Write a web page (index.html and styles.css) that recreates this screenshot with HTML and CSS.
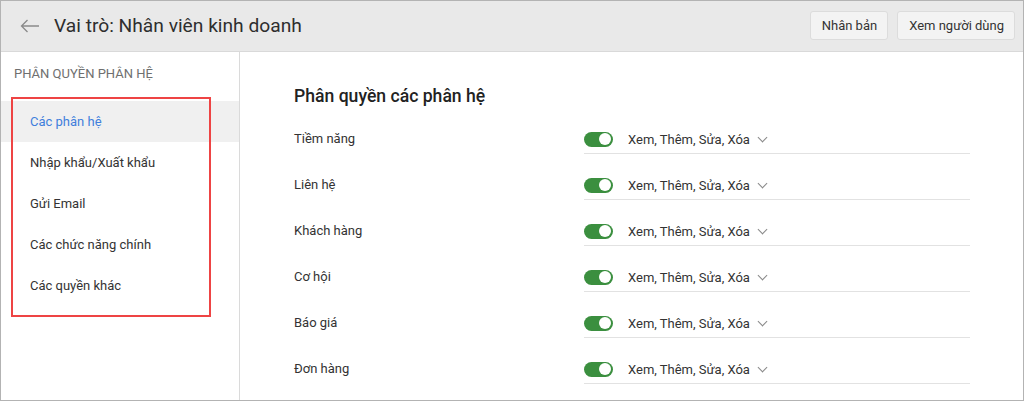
FILE: index.html
```html
<!DOCTYPE html>
<html>
<head>
    <title>Vai trò: Nhân viên kinh doanh</title>
    <meta charset="utf-8">
    <link rel="stylesheet" href="styles.css">
</head>
<body>
    <div class="frame">
        <div class="header">
            <div class="header-left">
                <svg class="back" width="20" height="14" viewBox="0 0 20 14">
                    <path d="M19 7H1.5M7.5 1L1.5 7l6 6" fill="none" stroke="#8a8a8a" stroke-width="1.3"/>
                </svg>
                <h1>Vai trò: Nhân viên kinh doanh</h1>
            </div>
            <div class="header-actions">
                <button class="btn">Nhân bản</button>
                <button class="btn">Xem người dùng</button>
            </div>
        </div>

        <div class="content">
            <div class="sidebar">
                <div class="sidebar-title">PHÂN QUYỀN PHÂN HỆ</div>
                <ul class="menu">
                    <li class="active">Các phân hệ</li>
                    <li>Nhập khẩu/Xuất khẩu</li>
                    <li>Gửi Email</li>
                    <li>Các chức năng chính</li>
                    <li>Các quyền khác</li>
                </ul>
                <div class="highlight"></div>
            </div>

            <div class="main">
                <h2>Phân quyền các phân hệ</h2>
                <div class="perm-row">
                    <div class="perm-name">Tiềm năng</div>
                    <div class="perm-ctrl"><span class="toggle"></span><span class="perm-value">Xem, Thêm, Sửa, Xóa</span><span class="chev"></span></div>
                </div>
                <div class="perm-row">
                    <div class="perm-name">Liên hệ</div>
                    <div class="perm-ctrl"><span class="toggle"></span><span class="perm-value">Xem, Thêm, Sửa, Xóa</span><span class="chev"></span></div>
                </div>
                <div class="perm-row">
                    <div class="perm-name">Khách hàng</div>
                    <div class="perm-ctrl"><span class="toggle"></span><span class="perm-value">Xem, Thêm, Sửa, Xóa</span><span class="chev"></span></div>
                </div>
                <div class="perm-row">
                    <div class="perm-name">Cơ hội</div>
                    <div class="perm-ctrl"><span class="toggle"></span><span class="perm-value">Xem, Thêm, Sửa, Xóa</span><span class="chev"></span></div>
                </div>
                <div class="perm-row">
                    <div class="perm-name">Báo giá</div>
                    <div class="perm-ctrl"><span class="toggle"></span><span class="perm-value">Xem, Thêm, Sửa, Xóa</span><span class="chev"></span></div>
                </div>
                <div class="perm-row">
                    <div class="perm-name">Đơn hàng</div>
                    <div class="perm-ctrl"><span class="toggle"></span><span class="perm-value">Xem, Thêm, Sửa, Xóa</span><span class="chev"></span></div>
                </div>
            </div>
        </div>
    </div>
</body>
</html>
```

FILE: styles.css
```css
html, body {
    margin: 0;
    padding: 0;
    background: #fff;
}
body {
    font-family: Roboto, "Noto Sans", Arial, sans-serif;
    color: #333;
}
.frame {
    width: 1024px;
    height: 401px;
    box-sizing: border-box;
    border: 1px solid #b3b3b3;
    overflow: hidden;
    display: flex;
    flex-direction: column;
}
.header {
    height: 50px;
    flex: none;
    background: #e9e9e9;
    border-bottom: 1px solid #d9d9d9;
    display: flex;
    align-items: center;
    justify-content: space-between;
    padding: 0 8px 0 19px;
}
.header-left {
    display: flex;
    align-items: center;
}
.back {
    display: block;
    margin-right: 14px;
}
.header h1 {
    margin: 0;
    font-size: 19.2px;
    font-weight: 400;
    color: #2e2e2e;
    line-height: 24px;
}
.header-actions {
    display: flex;
    gap: 9px;
    margin-top: -1px;
}
.btn {
    height: 29px;
    padding: 0 10px 0 11px;
    font-family: inherit;
    font-size: 13px;
    color: #333;
    background: #f3f3f3;
    border: 1px solid #dcdcdc;
    border-radius: 3px;
}
.content {
    flex: 1;
    display: flex;
}
.sidebar {
    width: 238px;
    flex: none;
    border-right: 1px solid #dadada;
    position: relative;
}
.sidebar-title {
    font-size: 13px;
    line-height: 20px;
    color: #6f6f6f;
    padding: 12px 0 0 13px;
}
.menu {
    list-style: none;
    margin: 17px 0 0;
    padding: 0;
}
.menu li {
    height: 41px;
    line-height: 41px;
    padding-left: 29px;
    font-size: 13px;
    color: #333;
}
.menu li.active {
    background: #f0f0f0;
    color: #3f7fdc;
}
.highlight {
    position: absolute;
    left: 10px;
    top: 45px;
    width: 196px;
    height: 216px;
    border: 2px solid #ee4444;
}
.main {
    flex: 1;
    padding: 32px 0 0 54px;
}
.main h2 {
    margin: 0;
    font-size: 17.6px;
    font-weight: 500;
    line-height: 24px;
    color: #222;
}
.perm-row {
    display: flex;
}
.perm-name {
    width: 290px;
    padding-top: 17px;
    line-height: 28px;
    font-size: 13px;
    color: #333;
}
.perm-ctrl {
    width: 386px;
    margin-top: 17px;
    height: 28px;
    border-bottom: 1px solid #e2e2e2;
    display: flex;
    align-items: center;
}
.toggle {
    width: 29px;
    height: 15px;
    border-radius: 8px;
    background: #3b8f3f;
    position: relative;
    flex: none;
}
.toggle::after {
    content: "";
    position: absolute;
    right: 2px;
    top: 1.5px;
    width: 12px;
    height: 12px;
    border-radius: 50%;
    background: #fff;
}
.perm-value {
    margin-left: 15px;
    font-size: 13px;
    color: #333;
}
.chev {
    width: 6px;
    height: 6px;
    border-right: 1px solid #888;
    border-bottom: 1px solid #888;
    transform: rotate(45deg);
    margin: -4px 0 0 9px;
}
```
